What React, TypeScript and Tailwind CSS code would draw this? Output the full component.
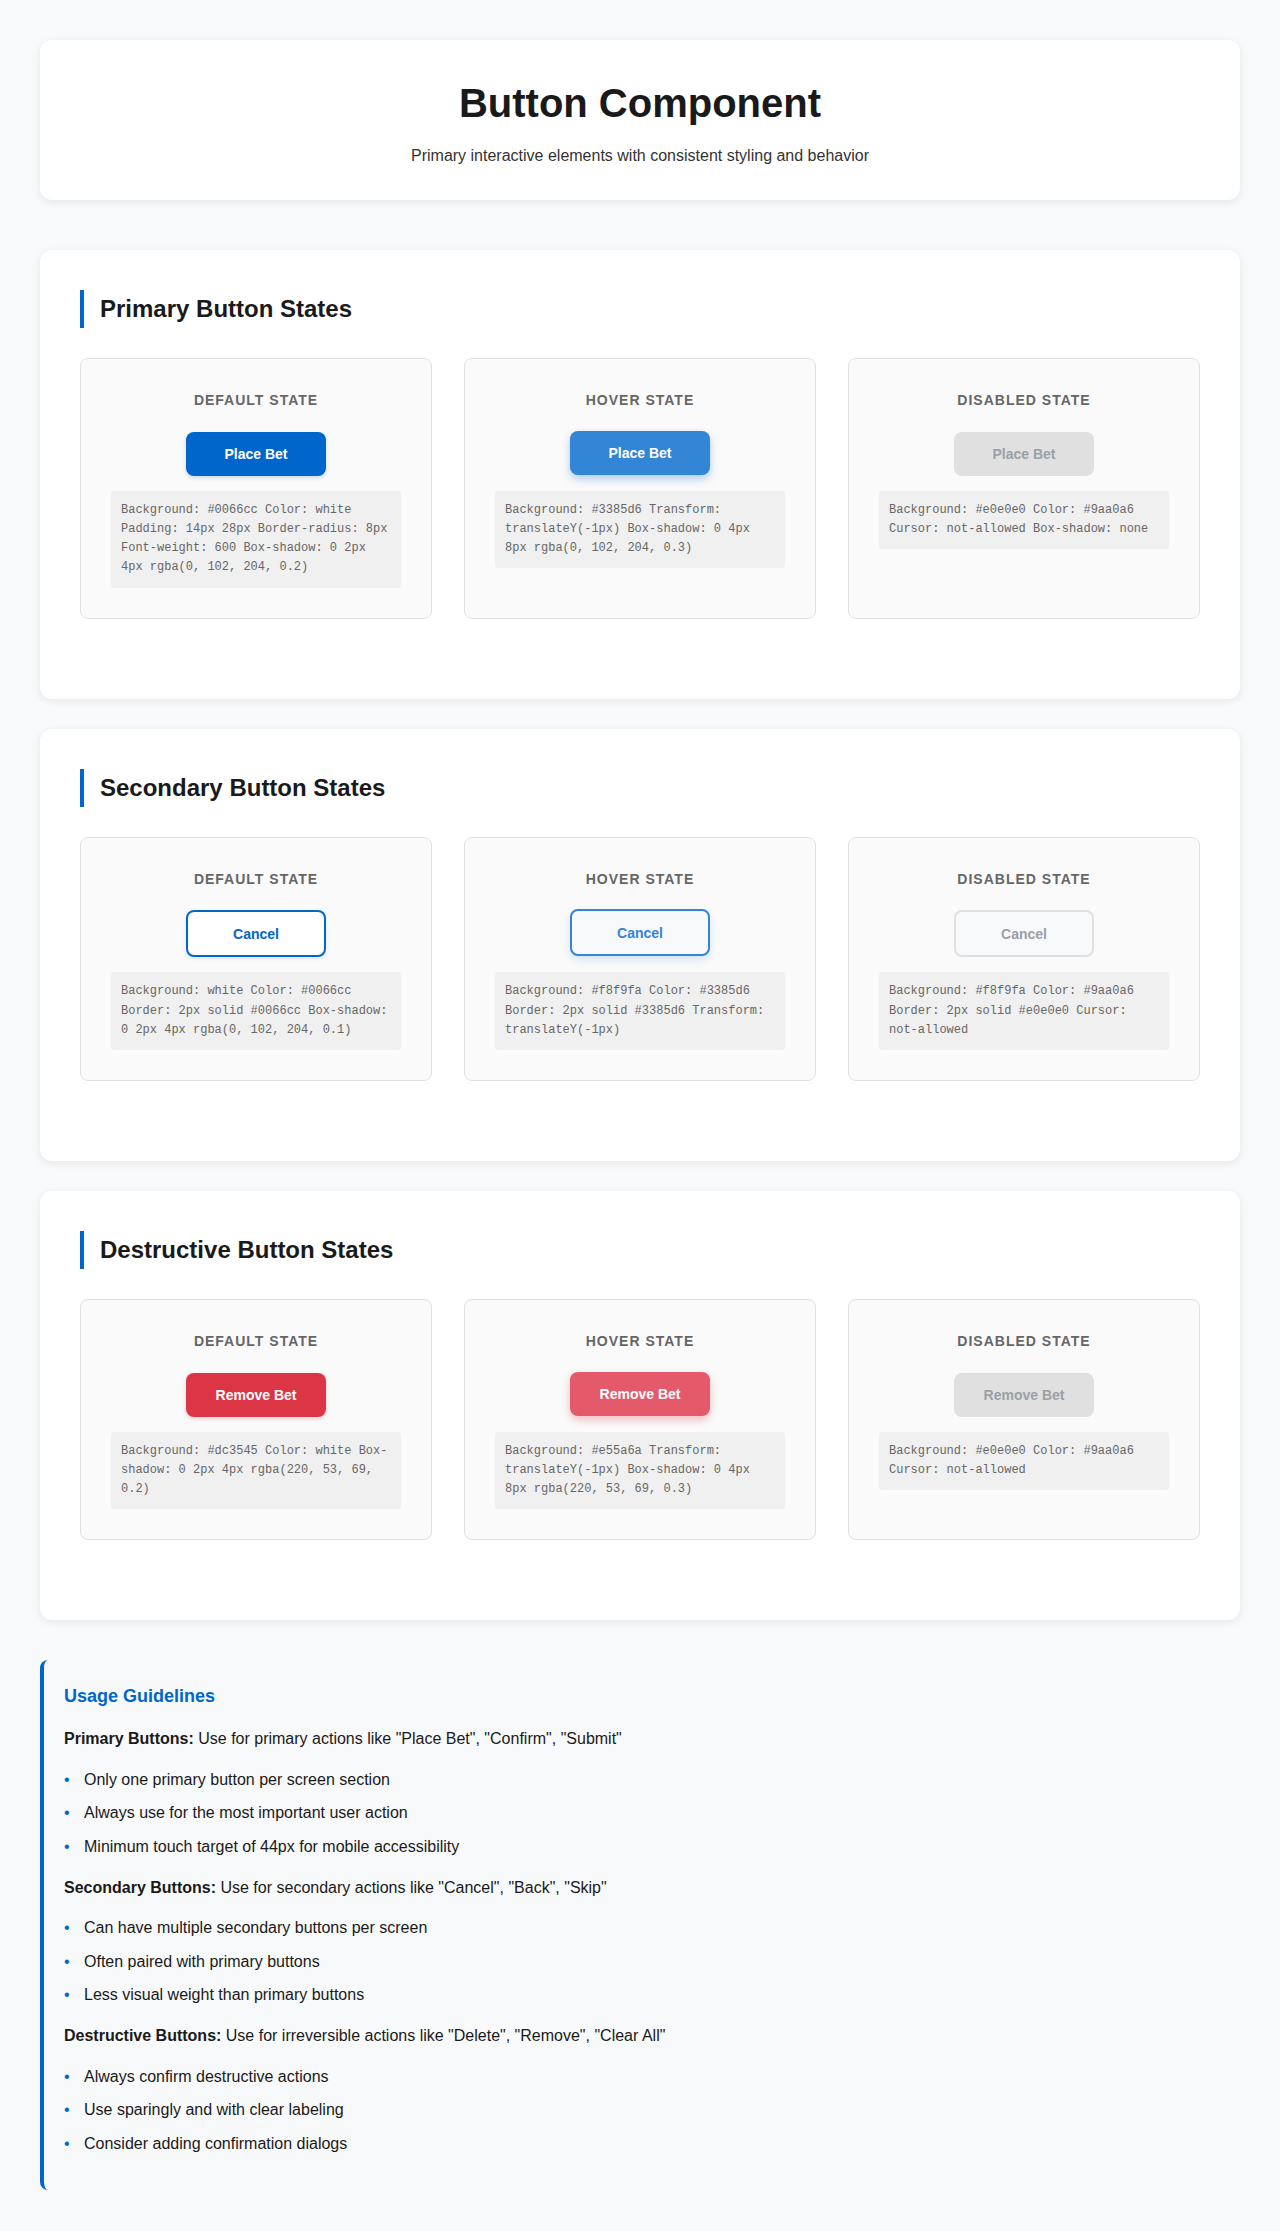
import React from "react";

type Variant =
  | "pDefault"
  | "pHover"
  | "pDisabled"
  | "sDefault"
  | "sHover"
  | "sDisabled"
  | "dDefault"
  | "dHover"
  | "dDisabled";

const buttonClass: Record<Variant, string> = {
  pDefault:
    "h-[44px] bg-[#0066cc] text-white shadow-[0_2px_4px_rgba(0,102,204,0.2)]",
  pHover:
    "h-[44px] -translate-y-px bg-[#3385d6] text-white shadow-[0_4px_8px_rgba(0,102,204,0.3)]",
  pDisabled: "h-[44px] bg-[#e0e0e0] text-[#9aa0a6] cursor-not-allowed",
  sDefault:
    "h-[47px] border-2 border-[#0066cc] bg-white text-[#0066cc] shadow-[0_2px_4px_rgba(0,102,204,0.1)]",
  sHover:
    "h-[47px] -translate-y-px border-2 border-[#3385d6] bg-[#f8f9fa] text-[#3385d6] shadow-[0_4px_8px_rgba(0,102,204,0.15)]",
  sDisabled:
    "h-[47px] border-2 border-[#e0e0e0] bg-[#f8f9fa] text-[#9aa0a6] cursor-not-allowed",
  dDefault:
    "h-[44px] bg-[#dc3545] text-white shadow-[0_2px_4px_rgba(220,53,69,0.2)]",
  dHover:
    "h-[44px] -translate-y-px bg-[#e55a6a] text-white shadow-[0_4px_8px_rgba(220,53,69,0.3)]",
  dDisabled: "h-[44px] bg-[#e0e0e0] text-[#9aa0a6] cursor-not-allowed",
};

function StateBox({
  label,
  variant,
  text,
  code,
}: {
  label: string;
  variant: Variant;
  text: string;
  code: string;
}) {
  return (
    <div className="rounded-lg border border-[#e0e0e0] bg-[#fafafa] p-[30px] text-center">
      <div className="mb-5 text-sm font-bold uppercase leading-[22.4px] tracking-[1px] text-[#666]">
        {label}
      </div>
      <div className="flex justify-center">
        <button
          className={
            "flex w-[140px] items-center justify-center rounded-lg text-sm font-bold leading-4 " +
            buttonClass[variant]
          }
        >
          {text}
        </button>
      </div>
      <div className="mt-[15px] rounded bg-[#f0f0f0] p-[10px] text-left font-['Liberation_Mono','Courier_New',monospace] text-xs leading-[19.2px] text-[#666]">
        {code}
      </div>
    </div>
  );
}

function Section({
  title,
  children,
}: {
  title: string;
  children: React.ReactNode;
}) {
  return (
    <section className="rounded-xl bg-white p-10 shadow-[0_2px_8px_rgba(0,0,0,0.08)]">
      <h2 className="mb-[30px] border-l-4 border-[#0066cc] pl-4 text-2xl font-bold leading-[38.4px] text-[#1a1a1a]">
        {title}
      </h2>
      <div className="mb-10 grid grid-cols-3 gap-8">{children}</div>
    </section>
  );
}

function Bullet({ children }: { children: React.ReactNode }) {
  return (
    <li className="flex leading-[25.6px]">
      <span className="w-5 shrink-0 text-[#0066cc]">•</span>
      <span>{children}</span>
    </li>
  );
}

function BulletList({
  items,
  last,
}: {
  items: string[];
  last?: boolean;
}) {
  return (
    <ul className={"flex flex-col gap-2 " + (last ? "" : "mb-[15px]")}>
      {items.map((t) => (
        <Bullet key={t}>{t}</Bullet>
      ))}
    </ul>
  );
}

export default function App() {
  return (
    <div className="min-h-screen bg-[#f8f9fa] p-10 font-['Liberation_Sans',Arial,sans-serif] leading-[1.6] text-[#1a1a1a]">
      <header className="mb-[50px] rounded-xl bg-white pb-[31px] pt-10 text-center shadow-[0_2px_8px_rgba(0,0,0,0.08)]">
        <h1 className="mb-[17px] text-[40px] font-bold leading-[46px] text-[#1a1a1a]">
          Button Component
        </h1>
        <p className="text-base leading-[26px] text-[#333]">
          Primary interactive elements with consistent styling and behavior
        </p>
      </header>

      <div className="flex flex-col gap-[30px]">
        <Section title="Primary Button States">
          <StateBox
            label="Default State"
            variant="pDefault"
            text="Place Bet"
            code="Background: #0066cc Color: white Padding: 14px 28px Border-radius: 8px Font-weight: 600 Box-shadow: 0 2px 4px rgba(0, 102, 204, 0.2)"
          />
          <StateBox
            label="Hover State"
            variant="pHover"
            text="Place Bet"
            code="Background: #3385d6 Transform: translateY(-1px) Box-shadow: 0 4px 8px rgba(0, 102, 204, 0.3)"
          />
          <StateBox
            label="Disabled State"
            variant="pDisabled"
            text="Place Bet"
            code="Background: #e0e0e0 Color: #9aa0a6 Cursor: not-allowed Box-shadow: none"
          />
        </Section>

        <Section title="Secondary Button States">
          <StateBox
            label="Default State"
            variant="sDefault"
            text="Cancel"
            code="Background: white Color: #0066cc Border: 2px solid #0066cc Box-shadow: 0 2px 4px rgba(0, 102, 204, 0.1)"
          />
          <StateBox
            label="Hover State"
            variant="sHover"
            text="Cancel"
            code="Background: #f8f9fa Color: #3385d6 Border: 2px solid #3385d6 Transform: translateY(-1px)"
          />
          <StateBox
            label="Disabled State"
            variant="sDisabled"
            text="Cancel"
            code="Background: #f8f9fa Color: #9aa0a6 Border: 2px solid #e0e0e0 Cursor: not-allowed"
          />
        </Section>

        <Section title="Destructive Button States">
          <StateBox
            label="Default State"
            variant="dDefault"
            text="Remove Bet"
            code="Background: #dc3545 Color: white Box-shadow: 0 2px 4px rgba(220, 53, 69, 0.2)"
          />
          <StateBox
            label="Hover State"
            variant="dHover"
            text="Remove Bet"
            code="Background: #e55a6a Transform: translateY(-1px) Box-shadow: 0 4px 8px rgba(220, 53, 69, 0.3)"
          />
          <StateBox
            label="Disabled State"
            variant="dDisabled"
            text="Remove Bet"
            code="Background: #e0e0e0 Color: #9aa0a6 Cursor: not-allowed"
          />
        </Section>
      </div>

      <div className="mt-10 rounded-lg border-l-4 border-[#0066cc] bg-[#f8f9fa] px-5 pb-[34px] pt-[22px] text-base">
        <h3 className="mb-[15px] text-lg font-bold leading-[28.8px] text-[#0066cc]">
          Usage Guidelines
        </h3>
        <p className="mb-[15px] leading-[25.6px]">
          <strong className="font-bold">Primary Buttons:</strong> Use for primary
          actions like "Place Bet", "Confirm", "Submit"
        </p>
        <BulletList
          items={[
            "Only one primary button per screen section",
            "Always use for the most important user action",
            "Minimum touch target of 44px for mobile accessibility",
          ]}
        />
        <p className="mb-[15px] leading-[25.6px]">
          <strong className="font-bold">Secondary Buttons:</strong> Use for
          secondary actions like "Cancel", "Back", "Skip"
        </p>
        <BulletList
          items={[
            "Can have multiple secondary buttons per screen",
            "Often paired with primary buttons",
            "Less visual weight than primary buttons",
          ]}
        />
        <p className="mb-[15px] leading-[25.6px]">
          <strong className="font-bold">Destructive Buttons:</strong> Use for
          irreversible actions like "Delete", "Remove", "Clear All"
        </p>
        <BulletList
          last
          items={[
            "Always confirm destructive actions",
            "Use sparingly and with clear labeling",
            "Consider adding confirmation dialogs",
          ]}
        />
      </div>
    </div>
  );
}
